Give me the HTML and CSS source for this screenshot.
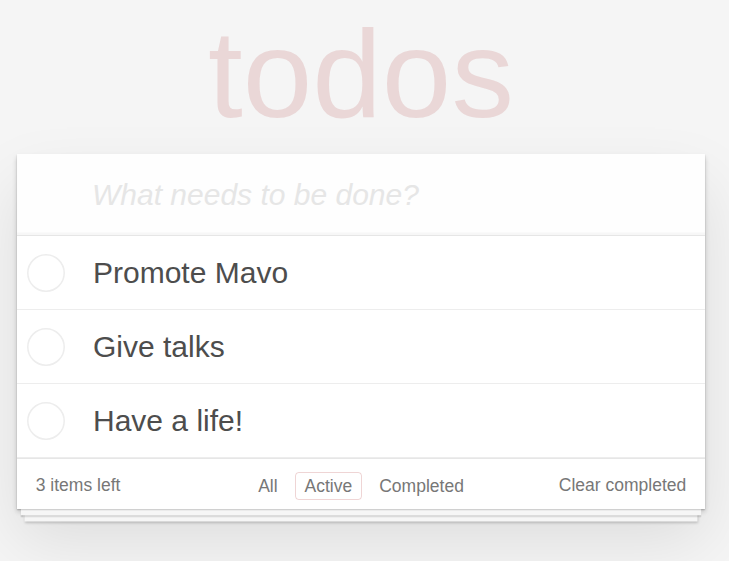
FILE: index.html
```html
<!DOCTYPE html>
<html lang="en">
<head>
<meta charset="utf-8">
<title>todos</title>
<link rel="stylesheet" href="styles.css">
</head>
<body>
<section class="todoapp">
  <h1 class="title">todos</h1>
  <div class="card">
    <header class="new-row">
      <input class="new-todo" placeholder="What needs to be done?">
    </header>
    <ul class="todo-list">
      <li class="todo">
        <span class="toggle"><svg width="38" height="38" viewBox="0 0 38 38"><circle cx="19" cy="19" r="18.2" fill="none" stroke="#ededed" stroke-width="1.5"/></svg></span>
        <label class="todo-label">Promote Mavo</label>
      </li>
      <li class="todo">
        <span class="toggle"><svg width="38" height="38" viewBox="0 0 38 38"><circle cx="19" cy="19" r="18.2" fill="none" stroke="#ededed" stroke-width="1.5"/></svg></span>
        <label class="todo-label">Give talks</label>
      </li>
      <li class="todo">
        <span class="toggle"><svg width="38" height="38" viewBox="0 0 38 38"><circle cx="19" cy="19" r="18.2" fill="none" stroke="#ededed" stroke-width="1.5"/></svg></span>
        <label class="todo-label">Have a life!</label>
      </li>
    </ul>
    <footer class="footer">
      <span class="count">3 items left</span>
      <ul class="filters">
        <li><a class="filter">All</a></li>
        <li><a class="filter selected">Active</a></li>
        <li><a class="filter">Completed</a></li>
      </ul>
      <span class="clear">Clear completed</span>
    </footer>
  </div>
</section>
</body>
</html>
```

FILE: styles.css
```css
html, body {
  margin: 0;
  padding: 0;
}
html {
  background: #f5f5f5;
}
body {
  box-sizing: border-box;
  min-height: 561px;
  background: #f5f5f5;
  font-family: "Liberation Sans", Arial, Helvetica, sans-serif;
  font-size: 17.5px;
  line-height: 1.4em;
  color: #4d4d4d;
  padding: 11px 24px 0 17px;
}
.todoapp {
  width: 688px;
}
.title {
  margin: 0 0 18px;
  height: 125px;
  font-size: 125px;
  line-height: 125px;
  font-weight: 400;
  text-align: center;
  color: rgba(175, 47, 47, 0.15);
}
.card {
  background: #fff;
  box-shadow:
    0 1.25px 1.25px rgba(0, 0, 0, 0.2),
    0 10px 0 -3.75px #f6f6f6,
    0 11.25px 1.25px -3.75px rgba(0, 0, 0, 0.2),
    0 20px 0 -7.5px #f6f6f6,
    0 21.25px 2.5px -7.5px rgba(0, 0, 0, 0.2),
    0 2.5px 5px 0 rgba(0, 0, 0, 0.2),
    0 31.25px 62.5px 0 rgba(0, 0, 0, 0.1);
}
.new-row {
  display: block;
}
.new-todo {
  display: block;
  box-sizing: border-box;
  width: 100%;
  margin: 0;
  padding: 19.5px 20px 19.5px 75px;
  border: none;
  outline: none;
  font-family: inherit;
  font-size: 30px;
  line-height: 42px;
  height: 81px;
  color: inherit;
  background: rgba(0, 0, 0, 0.003);
  box-shadow: inset 0 -2.5px 1.25px rgba(0, 0, 0, 0.03);
}
.new-todo::placeholder {
  font-style: italic;
  color: #e6e6e6;
}
.todo-list {
  margin: 0;
  padding: 0;
  list-style: none;
  border-top: 1px solid #e6e6e6;
}
.todo {
  display: flex;
  align-items: center;
  border-bottom: 1px solid #ededed;
  font-size: 30px;
}
.toggle {
  display: flex;
  width: 38px;
  height: 38px;
  margin: 0 28px 0 10px;
}
.todo-label {
  flex: 1;
  display: block;
  padding: 18.5px 75px 18.5px 0;
  line-height: 36px;
  color: #4d4d4d;
}
.footer {
  display: grid;
  grid-template-columns: 1fr auto 1fr;
  align-items: center;
  height: 25px;
  padding: 12.5px 18.75px;
  border-top: 1px solid #e6e6e6;
  color: #777;
  font-size: 17.5px;
  line-height: 25px;
}
.count {
  justify-self: start;
}
.clear {
  justify-self: end;
}
.filters {
  display: flex;
  margin: 0;
  padding: 0;
  list-style: none;
}
.filter {
  display: block;
  margin: 0 3.75px;
  padding: 0 8.75px;
  height: 26px;
  line-height: 26px;
  border: 1.25px solid transparent;
  border-radius: 3.75px;
  color: inherit;
}
.filter.selected {
  border-color: rgba(175, 47, 47, 0.2);
}
```
